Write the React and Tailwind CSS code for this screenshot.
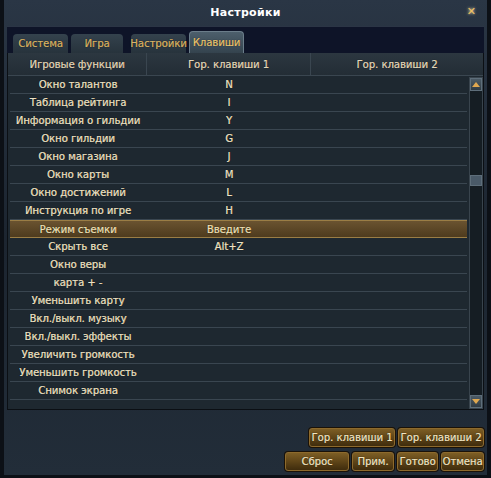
import React from "react";

const rows = [
  ["Окно талантов", "N"],
  ["Таблица рейтинга", "I"],
  ["Информация о гильдии", "Y"],
  ["Окно гильдии", "G"],
  ["Окно магазина", "J"],
  ["Окно карты", "M"],
  ["Окно достижений", "L"],
  ["Инструкция по игре", "H"],
  ["Режим съемки", "Введите", true],
  ["Скрыть все", "Alt+Z"],
  ["Окно веры", ""],
  ["карта + -", ""],
  ["Уменьшить карту", ""],
  ["Вкл./выкл. музыку", ""],
  ["Вкл./выкл. эффекты", ""],
  ["Увеличить громкость", ""],
  ["Уменьшить громкость", ""],
  ["Снимок экрана", ""],
];

const font = { fontFamily: '"DejaVu Sans", "Liberation Sans", sans-serif' };
const shadow = { textShadow: "0 0 1px rgba(0,0,0,0.9), 0.3px 0 0 currentColor" };

function Btn({ children, w }) {
  return (
    <div
      className={`${w} h-[19px] flex items-center justify-center whitespace-nowrap rounded-[3px] border border-[#8d6a2c] bg-gradient-to-b from-[#7d5e25] via-[#5f4518] to-[#3f2c0d] text-[10px] text-[#f3e6c2] shadow-[0_0_0_1px_#1a1208]`}
      style={shadow}
    >
      {children}
    </div>
  );
}

function Tab({ children, active, w }) {
  if (active)
    return (
      <div className={`${w} h-[22px] flex items-center justify-center whitespace-nowrap rounded-t-[4px] border border-b-0 border-[#6b7d8a] bg-gradient-to-b from-[#4d5f6c] to-[#34434e] text-[10px] text-[#e8c777]`} style={shadow}>
        {children}
      </div>
    );
  return (
    <div className={`${w} h-[19px] flex items-center justify-center whitespace-nowrap rounded-t-[4px] bg-gradient-to-b from-[#34424d] to-[#27333c] text-[10px] text-[#d7b56a]`} style={shadow}>
      {children}
    </div>
  );
}

export default function App() {
  return (
    <div
      className="relative w-[491px] h-[478px] overflow-hidden bg-gradient-to-b from-[#2a3645] via-[#1c2530] to-[#222d39] border-x-[4px] border-b-[3px] border-[#0c1016]"
      style={font}
    >
      {/* title */}
      <div className="h-[26px] flex items-center justify-center relative">
        <span className="text-white text-[11px] font-bold tracking-[0.3px]">Настройки</span>
        <span className="absolute right-[11px] top-[6px] text-[#f0c060] text-[11px] font-bold leading-none" style={{ textShadow: "0 0 3px #fff3c0" }}>✕</span>
      </div>
      {/* tabs */}
      <div className="mx-[3px] h-[27px] bg-[#0e1428] flex items-end pl-[6px] gap-[3px] border-t border-[#2b3545]">
        <Tab w="w-[55px]">Система</Tab>
        <Tab w="w-[52px]">Игра</Tab>
        <div className="w-[2px]" />
        <Tab w="w-[55px]">Настройки</Tab>
        <Tab w="w-[55px]" active>Клавиши</Tab>
      </div>
      {/* panel */}
      <div className="mx-[3px] h-[357px] bg-[#1e2830] border border-t-0 border-[#0b0f14] flex flex-col">
        <div className="h-[23px] shrink-0 flex items-center bg-gradient-to-b from-[#2c3740] to-[#232d35] border-b border-[#3a4650] text-[10px] text-[#e2d8bd]" style={shadow}>
          <div className="w-[139px] text-center border-r border-[#3a4650] h-full flex items-center justify-center">Игровые функции</div>
          <div className="w-[164px] text-center border-r border-[#3a4650] h-full flex items-center justify-center">Гор. клавиши 1</div>
          <div className="flex-1 text-center h-full flex items-center justify-center">Гор. клавиши 2</div>
        </div>
        <div className="flex flex-1 pl-[2px]">
          <div className="w-[458px] flex flex-col">
            {rows.map(([name, key, hi], i) => (
              <div
                key={i}
                className={`h-[18px] shrink-0 flex items-center text-[10px] ${hi ? "bg-gradient-to-b from-[#6a5330] to-[#4e3b1e] border-y border-[#9a7d45] text-[#f0e2b8]" : "border-b border-[#3a4650] text-[#ece2c6]"}`}
                style={shadow}
              >
                <div className="w-[136px] text-center whitespace-nowrap">{name}</div>
                <div className="w-[166px] text-center">{key}</div>
                <div className="flex-1" />
              </div>
            ))}
          </div>
          <div className="ml-[2px] mt-[1px] w-[14px] h-[332px] bg-[#151d23] border border-[#39444d] flex flex-col justify-between relative">
            <div className="h-[13px] bg-gradient-to-b from-[#4c5b66] to-[#2f3b44] border border-[#5e6e7a] flex items-center justify-center">
              <div className="w-0 h-0 border-x-[4px] border-x-transparent border-b-[5px] border-b-[#e0a850]" />
            </div>
            <div className="absolute left-0 right-0 top-[97px] h-[11px] bg-[#4a5a68] border border-[#5e6e7a]" />
            <div className="h-[13px] bg-gradient-to-b from-[#4c5b66] to-[#2f3b44] border border-[#5e6e7a] flex items-center justify-center">
              <div className="w-0 h-0 border-x-[4px] border-x-transparent border-t-[5px] border-t-[#e0a850]" />
            </div>
          </div>
        </div>
      </div>
      {/* buttons */}
      <div className="mt-[18px] pr-[3px] flex flex-col items-end gap-[5px]">
        <div className="flex gap-[3px]">
          <Btn w="w-[86px]">Гор. клавиши 1</Btn>
          <Btn w="w-[86px]">Гор. клавиши 2</Btn>
        </div>
        <div className="flex gap-[3px]">
          <Btn w="w-[64px]">Сброс</Btn>
          <Btn w="w-[42px]">Прим.</Btn>
          <Btn w="w-[41px]">Готово</Btn>
          <Btn w="w-[43px]">Отмена</Btn>
        </div>
      </div>
    </div>
  );
}
